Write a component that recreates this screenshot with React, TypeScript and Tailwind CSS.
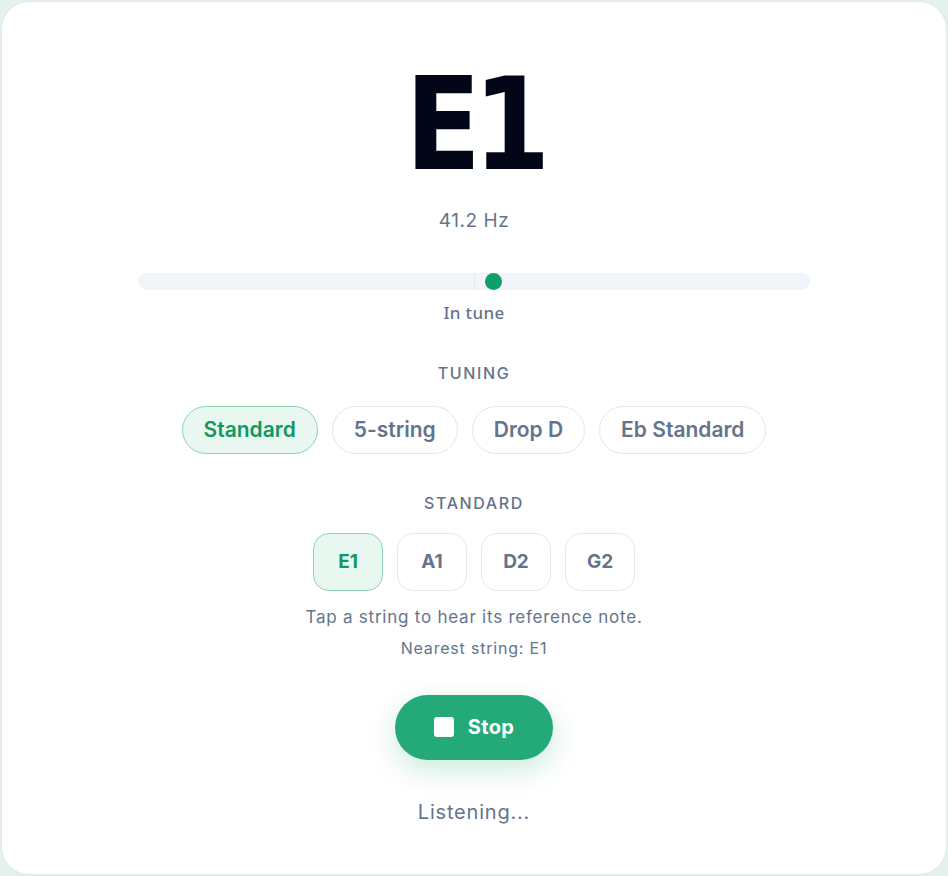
import React, { useState } from "react";

const TUNINGS = ["Standard", "5-string", "Drop D", "Eb Standard"];
const STRINGS = ["E1", "A1", "D2", "G2"];

export default function App() {
  const [tuning, setTuning] = useState("Standard");
  const [active, setActive] = useState("E1");
  const cents = 6; // offset of the needle, in cents

  return (
    <div className="w-[948px] h-[876px] bg-[#e4f1ec] p-px font-['Inter',sans-serif]">
      <div className="h-full w-full bg-white rounded-[28px] border border-[#e3e6ea] flex flex-col items-center">
        {/* Note */}
        <div className="mt-[58px] h-[129px] flex items-center justify-center text-[129px] leading-none font-black tracking-[-0.07em] text-[#020617] font-['DejaVu_Sans',sans-serif] scale-x-[0.86]">
          E1
        </div>
        <div className="mt-[18px] text-[19px] tracking-[0.03em] text-[#64748b]">41.2 Hz</div>

        {/* Meter */}
        <div className="relative mt-[37px] w-[672px] h-[17px] rounded-full bg-[#f1f5f9]">
          <div className="absolute left-1/2 top-0 h-full w-px bg-[#e2e8f0]" />
          <div
            className="absolute top-1/2 w-[17px] h-[17px] -mt-[8.5px] -ml-[8.5px] rounded-full bg-[#0e9f6a]"
            style={{ left: `calc(50% + ${cents * 3.3}px)` }}
          />
        </div>
        <div className="mt-[10px] text-[17px] font-medium tracking-[0.02em] text-[#64748b] font-['Noto_Sans',sans-serif]">In tune</div>

        {/* Tuning */}
        <div className="mt-[36px] text-[16px] font-medium tracking-[0.1em] text-[#64748b]">TUNING</div>
        <div className="mt-[21px] flex gap-[14px]">
          {TUNINGS.map((t) => (
            <button
              key={t}
              onClick={() => setTuning(t)}
              className={
                t === tuning
                  ? "h-[48px] px-[21px] rounded-full border border-[#8fd3b3] bg-[#e8f7f0] text-[#13975f] text-[21px] font-semibold"
                  : "h-[48px] px-[21px] rounded-full border border-[#e2e8f0] bg-white text-[#64748b] text-[21px] font-semibold"
              }
            >
              {t}
            </button>
          ))}
        </div>

        {/* Strings */}
        <div className="mt-[37px] text-[16px] font-medium tracking-[0.1em] text-[#64748b]">STANDARD</div>
        <div className="mt-[18px] flex gap-[14px]">
          {STRINGS.map((s) => (
            <button
              key={s}
              onClick={() => setActive(s)}
              className={
                s === active
                  ? "w-[70px] h-[58px] rounded-[16px] border border-[#8fd3b3] bg-[#e8f7f0] text-[#13975f] text-[19px] font-bold"
                  : "w-[70px] h-[58px] rounded-[16px] border border-[#e2e8f0] bg-white text-[#64748b] text-[19px] font-bold"
              }
            >
              {s}
            </button>
          ))}
        </div>
        <div className="mt-[14px] text-[17px] tracking-[0.045em] text-[#64748b]">Tap a string to hear its reference note.</div>
        <div className="mt-[5px] text-[16px] tracking-[0.05em] text-[#64748b]">Nearest string: {active}</div>

        {/* Action */}
        <button className="mt-[35px] w-[158px] h-[65px] rounded-full bg-[#24aa78] text-white text-[20px] font-bold tracking-[0.02em] flex items-center justify-center gap-[14px] shadow-[0_10px_28px_rgba(16,163,107,0.22)]">
          <span className="w-[20px] h-[20px] rounded-[3px] bg-white" />
          Stop
        </button>
        <div className="mt-[37px] text-[20px] tracking-[0.04em] text-[#64748b]">Listening...</div>
      </div>
    </div>
  );
}
